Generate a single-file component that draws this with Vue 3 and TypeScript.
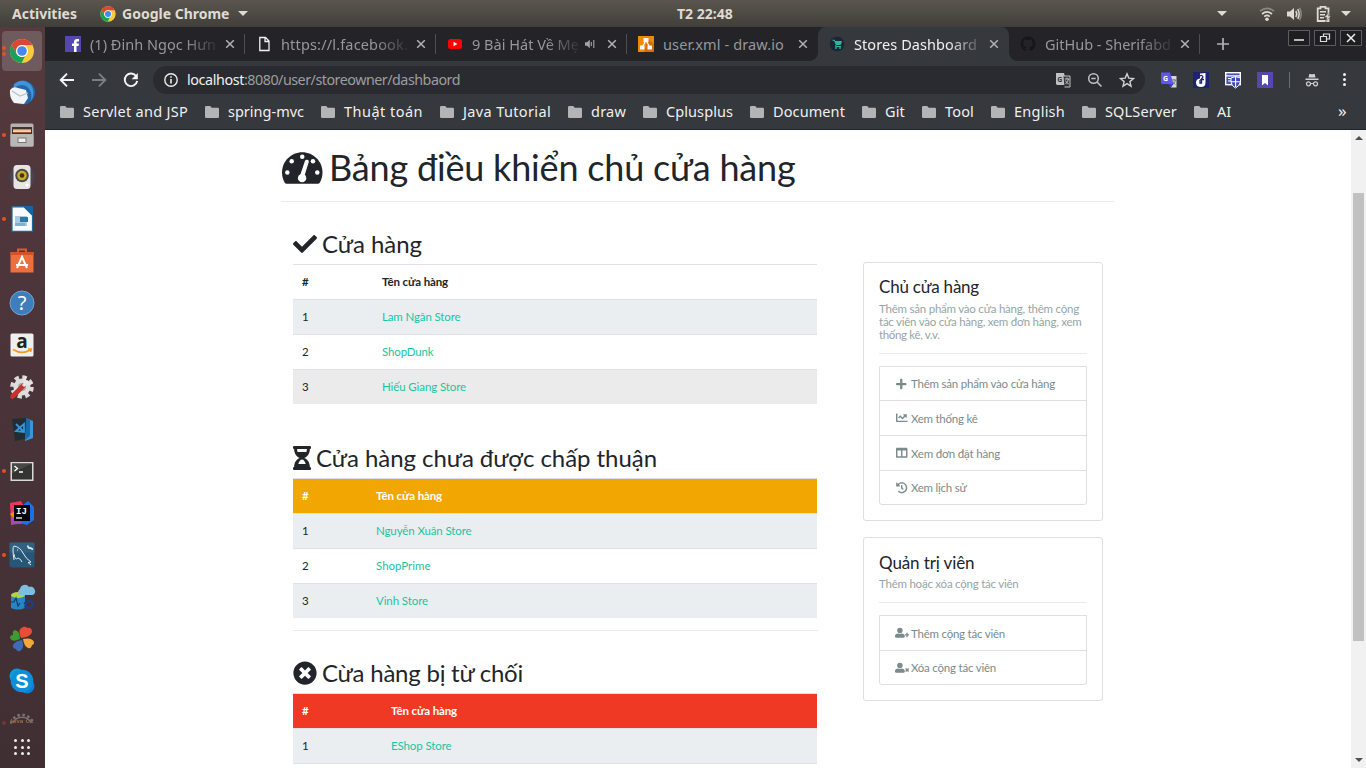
<script setup lang="ts">
import type { ObjectDirective } from 'vue'

/* Spreads a label's letters so that it takes exactly the given width. */
const vFit: ObjectDirective<HTMLElement, number> = {
  mounted(el, { value }) {
    const count = Array.from((el.textContent ?? '').normalize('NFC').trim()).length
    const natural = el.getBoundingClientRect().width
    if (count > 0) el.style.letterSpacing = `${((value - natural) / count).toFixed(4)}px`
  },
}

interface Tab { title: string; icon: string; width: number; active?: boolean; sound?: boolean; fade?: boolean; sep?: boolean }
const tabs: Tab[] = [
  { title: '(1) Đinh Ngọc Hưn', icon: 'facebook', width: 126, fade: true, sep: true },
  { title: 'https://l.facebook.', icon: 'page', width: 127, fade: true, sep: true },
  { title: '9 Bài Hát Về Mẹ', icon: 'youtube', width: 107, sound: true, fade: true, sep: true },
  { title: 'user.xml - draw.io', icon: 'draw', width: 121 },
  { title: 'Stores Dashboard', icon: 'store', width: 123, active: true, fade: true },
  { title: 'GitHub - Sherifabd', icon: 'github', width: 126, fade: true, sep: true },
]

const bookmarks = [
  { name: 'Servlet and JSP', w: 105 }, { name: 'spring-mvc', w: 76 }, { name: 'Thuật toán', w: 79 },
  { name: 'Java Tutorial', w: 88 }, { name: 'draw', w: 35 }, { name: 'Cplusplus', w: 67 },
  { name: 'Document', w: 72 }, { name: 'Git', w: 20 }, { name: 'Tool', w: 29 },
  { name: 'English', w: 51 }, { name: 'SQLServer', w: 72 }, { name: 'AI', w: 14 },
]

const dock = [
  { id: 'chrome', dots: 2, active: true }, { id: 'mail', dots: 0 }, { id: 'files', dots: 1 }, { id: 'music', dots: 0 },
  { id: 'writer', dots: 1 }, { id: 'software', dots: 0 }, { id: 'help', dots: 0 }, { id: 'amazon', dots: 0 },
  { id: 'settings', dots: 0 }, { id: 'vscode', dots: 0 }, { id: 'terminal', dots: 1 }, { id: 'idea', dots: 0 },
  { id: 'mysql', dots: 1 }, { id: 'database', dots: 0 }, { id: 'clover', dots: 0 }, { id: 'skype', dots: 0 },
]

const sections = [
  {
    kind: 'approved', title: 'Cửa hàng', w: 100, icon: 'check', nameCol: 'c1',
    rows: [{ n: 'Lam Ngân Store', w: 78.5 }, { n: 'ShopDunk', w: 51.5 }, { n: 'Hiếu Giang Store', w: 84, hover: true }],
  },
  {
    kind: 'pending', title: 'Cửa hàng chưa được chấp thuận', w: 341, icon: 'hourglass', nameCol: 'c2',
    rows: [{ n: 'Nguyễn Xuân Store', w: 95.5 }, { n: 'ShopPrime', w: 54.5 }, { n: 'Vinh Store', w: 52 }],
  },
  {
    kind: 'rejected', title: 'Cừa hàng bị từ chối', w: 201, icon: 'reject', nameCol: 'c3',
    rows: [{ n: 'EShop Store', w: 60.5 }, { n: '', w: 0 }],
  },
]

const cards = [
  {
    title: 'Chủ cửa hàng', tw: 100,
    lines: [
      { t: 'Thêm sản phẩm vào cửa hàng, thêm cộng', w: 200 },
      { t: 'tác viên vào cửa hàng, xem đơn hàng, xem', w: 202.5 },
      { t: 'thống kê, v.v.', w: 60.5 },
    ],
    items: [
      { t: 'Thêm sản phẩm vào cửa hàng', w: 144, icon: 'plus' },
      { t: 'Xem thống kê', w: 66.5, icon: 'chart' },
      { t: 'Xem đơn đặt hàng', w: 89, icon: 'columns' },
      { t: 'Xem lịch sử', w: 55.5, icon: 'history' },
    ],
  },
  {
    title: 'Quản trị viên', tw: 95.5,
    lines: [{ t: 'Thêm hoặc xóa cộng tác viên', w: 139.5 }],
    items: [
      { t: 'Thêm cộng tác viên', w: 94, icon: 'userplus' },
      { t: 'Xóa cộng tác viên', w: 85, icon: 'usertimes' },
    ],
  },
]

const fa: Record<string, string> = {
  check: 'M173.898 439.404l-166.4-166.4c-9.997-9.997-9.997-26.206 0-36.204l36.203-36.204c9.997-9.998 26.207-9.998 36.204 0L192 312.69 432.095 72.596c9.997-9.997 26.207-9.997 36.204 0l36.203 36.204c9.997 9.997 9.997 26.206 0 36.204l-294.4 294.401c-9.998 9.997-26.207 9.997-36.204-.001z',
  reject: 'M256 8C119 8 8 119 8 256s111 248 248 248 248-111 248-248S393 8 256 8zm121.6 313.1c4.7 4.7 4.7 12.3 0 17L338 377.6c-4.7 4.7-12.3 4.7-17 0L256 312l-65.1 65.6c-4.7 4.7-12.3 4.7-17 0L134.4 338c-4.7-4.7-4.7-12.3 0-17l65.6-65-65.6-65.1c-4.7-4.7-4.7-12.3 0-17l39.6-39.6c4.7-4.7 12.3-4.7 17 0l65 65.7 65.1-65.6c4.7-4.7 12.3-4.7 17 0l39.6 39.6c4.7 4.7 4.7 12.3 0 17L312 256l65.6 65.1z',
  hourglass: 'M24 0h336a24 24 0 0 1 24 24v16a24 24 0 0 1-24 24c0 91-51 168-121 192 70 24 121 101 121 192a24 24 0 0 1 24 24v16a24 24 0 0 1-24 24H24a24 24 0 0 1-24-24v-16a24 24 0 0 1 24-24c0-91 51-168 121-192C75 232 24 155 24 64A24 24 0 0 1 0 40V24A24 24 0 0 1 24 0zM88 64c0 22 3 44 9 64h190c6-20 9-42 9-64zM112 384c17-57 47-96 80-96s63 39 80 96z',
  plus: 'M416 208H272V64c0-17.67-14.33-32-32-32h-32c-17.67 0-32 14.33-32 32v144H32c-17.67 0-32 14.33-32 32v32c0 17.67 14.33 32 32 32h144v144c0 17.67 14.33 32 32 32h32c17.67 0 32-14.33 32-32V304h144c17.67 0 32-14.33 32-32v-32c0-17.67-14.33-32-32-32z',
  chart: 'M496 384H64V80c0-8.84-7.16-16-16-16H16C7.16 64 0 71.16 0 80v336c0 17.67 14.33 32 32 32h464c8.84 0 16-7.16 16-16v-32c0-8.84-7.16-16-16-16zM464 96H345.94c-21.38 0-32.09 25.85-16.97 40.97l32.4 32.4L288 242.75l-73.37-73.37c-12.5-12.5-32.76-12.5-45.25 0l-68.69 68.69c-6.25 6.25-6.25 16.38 0 22.63l22.62 22.62c6.25 6.25 16.38 6.25 22.63 0L192 237.25l73.37 73.37c12.5 12.5 32.76 12.5 45.25 0l96-96 32.4 32.4c15.12 15.12 40.97 4.41 40.97-16.97V112c.01-8.84-7.15-16-15.99-16z',
  columns: 'M464 32H48C21.49 32 0 53.49 0 80v352c0 26.51 21.49 48 48 48h416c26.51 0 48-21.49 48-48V80c0-26.51-21.49-48-48-48zM224 416H64V160h160v256zm224 0H288V160h160v256z',
  history: 'M504 255.531c.253 136.64-111.18 248.372-247.82 248.468-59.015.042-113.223-20.53-155.822-54.911-11.077-8.94-11.905-25.541-1.839-35.607l11.267-11.267c8.609-8.609 22.353-9.551 31.891-1.984C173.062 425.135 212.781 440 256 440c101.705 0 184-82.311 184-184 0-101.705-82.311-184-184-184-48.814 0-93.149 18.969-126.068 49.932l50.754 50.754c10.08 10.08 2.941 27.314-11.313 27.314H24c-8.837 0-16-7.163-16-16V38.627c0-14.254 17.234-21.393 27.314-11.314l49.372 49.372C129.209 34.136 189.552 8 256 8c136.81 0 247.747 110.78 248 247.531zm-180.912 78.784l9.823-12.63c8.138-10.463 6.253-25.542-4.21-33.679L288 256.349V152c0-13.255-10.745-24-24-24h-16c-13.255 0-24 10.745-24 24v135.651l65.409 50.874c10.463 8.137 25.541 6.253 33.679-4.21z',
  userplus: 'M224 32a125 125 0 1 0 0 250a125 125 0 1 0 0-250zM310 290c-50 26-122 26-172 0C62 300 0 340 0 400v40c0 22 18 40 40 40h368c22 0 40-18 40-40v-40c0-60-62-100-138-110zM520 260v70h-64v56h64v70h60v-70h60v-56h-60v-70z',
  usertimes: 'M224 32a125 125 0 1 0 0 250a125 125 0 1 0 0-250zM310 290c-50 26-122 26-172 0C62 300 0 340 0 400v40c0 22 18 40 40 40h368c22 0 40-18 40-40v-40c0-60-62-100-138-110zM462 312l44-44 48 48 48-48 42 44-48 48 48 48-42 44-48-48-48 48-44-44 48-48z',
}
const faBox: Record<string, string> = { hourglass: '0 0 384 512', plus: '0 0 448 512', userplus: '0 0 640 512', usertimes: '0 0 640 512' }
const apps = [0, 1, 2, 3, 4, 5, 6, 7, 8]
</script>

<template>
  <div class="screen">
    <header class="topbar">
      <span v-fit="68" class="activities">Activities</span>
      <svg class="tb-chrome" viewBox="0 0 24 24">
        <circle cx="12" cy="12" r="11.5" fill="#fcc93c" />
        <path d="M2 6.3A11.5 11.5 0 0 1 22 6.3H12A5.7 5.7 0 0 0 7 14.8z" fill="#dd4538" />
        <path d="M2 6.3L7 14.8A5.7 5.7 0 0 0 14.8 17L11.5 23.5A11.5 11.5 0 0 1 2 6.3z" fill="#18a15c" />
        <circle cx="12" cy="12" r="5.6" fill="#fff" /><circle cx="12" cy="12" r="4.5" fill="#4587f3" />
      </svg>
      <span v-fit="111" class="appname">Google Chrome</span>
      <i class="caret"></i>
      <span v-fit="58" class="clock">T2 22:48</span>
      <i class="caret tray-first"></i>
      <svg class="tray wifi" viewBox="0 0 16 16" fill="none" stroke-width="1.7">
        <path d="M1 5.2Q8-.4 15 5.2" stroke="#8a8881" /><path d="M3 8Q8 3.7 13 8M5.3 10.6Q8 8.2 10.7 10.6" stroke="#dfdbd2" /><circle cx="8" cy="13.2" r="1.8" fill="#dfdbd2" />
      </svg>
      <svg class="tray sound" viewBox="0 0 16 16" fill="none" stroke-width="1.5">
        <path d="M1 5.5h3L8 2v12l-4-3.5H1z" fill="#dfdbd2" /><path d="M9.8 5Q11.8 8 9.8 11M11.7 3.2Q14.6 8 11.7 12.8" stroke="#dfdbd2" /><path d="M13.5 1.8Q17 8 13.5 14.2" stroke="#8a8881" />
      </svg>
      <svg class="tray batt" viewBox="0 0 16 16">
        <path d="M4.500 2.300V.8h5v1.500H12.500V15H1.700V2.300z" fill="none" stroke="#dfdbd2" stroke-width="1.800" /><path d="M4 5h6v1.500H4zM4 8h5v1.500H4zM4 11h4v1.500H4z" fill="#dfdbd2" /><path d="M13 6.500l-5 5h3l-1.500 4.500 5.500-6h-3l2-3.500z" fill="#dfdbd2" stroke="#4c4a44" stroke-width=".5" />
      </svg>
      <i class="caret tray-last"></i>
    </header>

    <div class="body">
      <nav class="dock">
        <div v-for="d in dock" :key="d.id" class="slot" :class="{ active: d.active }">
          <span class="dots"><b v-for="k in d.dots" :key="k"></b></span>
          <svg class="dicon" viewBox="0 0 26 26">
            <template v-if="d.id === 'chrome'">
              <circle cx="13" cy="13" r="12" fill="#fbc93c" />
              <path d="M2.600 7A12 12 0 0 1 23.400 7H13A6 6 0 0 0 7.800 16z" fill="#dd4538" />
              <path d="M2.600 7L7.800 16A6 6 0 0 0 16 18.200L12.500 25A12 12 0 0 1 2.600 7z" fill="#18a15c" />
              <circle cx="13" cy="13" r="6" fill="#fff" /><circle cx="13" cy="13" r="4.800" fill="#4587f3" />
            </template>
            <template v-else-if="d.id === 'mail'">
              <circle cx="14" cy="12.500" r="12" fill="#2467ad" /><path d="M5 4Q14-3 22 5Q27 13 22 21Q24 10 17 6Q11 3 5 8z" fill="#3f95da" />
              <path d="M1 10Q4 6 9 8l8 2 2 8-4 6-10-1Q0 17 1 10z" fill="#f2f4f8" /><path d="M3 11l8 5 8-3" fill="none" stroke="#b3c0d0" stroke-width="1.200" />
            </template>
            <template v-else-if="d.id === 'files'">
              <rect x="1.500" y="1.500" width="23" height="23" rx="1.500" fill="#b5b3b1" /><rect x="3" y="5" width="20" height="7" fill="#43332d" /><rect x="4" y="7" width="18" height="3.500" fill="#f07c35" /><rect x="4" y="8.500" width="18" height="1.200" fill="#fff" />
              <rect x="1.500" y="12" width="23" height="12.500" rx="1" fill="#b9b8b7" /><rect x="9" y="16" width="8" height="4.500" fill="#eee" stroke="#777" />
            </template>
            <template v-else-if="d.id === 'music'">
              <circle cx="13" cy="13" r="12.500" fill="#46506e" opacity=".5" /><rect x="4.500" y="1" width="17" height="24" rx="3.500" fill="#e6e5e2" /><circle cx="13" cy="11.500" r="6.800" fill="#4b4a47" /><circle cx="13" cy="11.500" r="4.800" fill="#c9aa2a" /><circle cx="13" cy="11.500" r="2.300" fill="#3d3520" /><circle cx="18" cy="21" r="1.500" fill="#fff" />
            </template>
            <template v-else-if="d.id === 'writer'">
              <path d="M3 .8h12l8.500 8.500v16H3z" fill="#f8fafb" stroke="#1a679d" stroke-width="1.200" /><path d="M14 0h10v10z" fill="#1565a0" /><path d="M6 10h12v10H6z" fill="#a8cbe2" /><path d="M11 11h8v5h-8z" fill="#2f77a5" /><path d="M6 17h10v3H6z" fill="#7fb0d0" />
            </template>
            <template v-else-if="d.id === 'software'">
              <path d="M9 5V1.500h8V5" fill="none" stroke="#d95a2e" stroke-width="2" /><path d="M1.500 4h23v20.500h-23z" fill="#ec6f3f" /><path d="M1.500 4h23v3h-23z" fill="#d2532b" />
              <path d="M8 20l5-11 5 11M7 17h12" fill="none" stroke="#fff" stroke-width="2" />
            </template>
            <template v-else-if="d.id === 'help'">
              <circle cx="13" cy="13" r="12" fill="#3e7ebb" stroke="#74a4d0" /><text x="13" y="20" text-anchor="middle" class="g-help">?</text>
            </template>
            <template v-else-if="d.id === 'amazon'">
              <rect x="1.500" y="1.500" width="23" height="23" rx="1.500" fill="#efefef" /><text x="13" y="16" text-anchor="middle" class="g-amz">a</text><path d="M4 17.500Q13 23 21 18M19 17h3.500l-1 3" fill="none" stroke="#f29a1f" stroke-width="1.500" />
            </template>
            <template v-else-if="d.id === 'settings'">
              <circle cx="13" cy="13" r="9.800" fill="none" stroke="#dadada" stroke-width="4" stroke-dasharray="4.300 3.400" /><circle cx="13" cy="13" r="8.600" fill="#dedede" /><circle cx="13" cy="13" r="4" fill="#a9a5a5" />
              <path d="M3.500 22.500L14 12" stroke="#c4332d" stroke-width="4.600" stroke-linecap="round" /><path d="M14 12l5-5" stroke="#eee" stroke-width="3" /><path d="M17 3a4 4 0 1 0 6 5" fill="none" stroke="#e5e5e5" stroke-width="2.500" />
            </template>
            <template v-else-if="d.id === 'vscode'">
              <path d="M17 2l7 3v17l-8 3z" fill="#3a96d8" /><path d="M3 3l15-1-2 21-10 2z" fill="#222c35" /><path d="M17 2l4 2v16l-5 4z" fill="#196ba8" /><path d="M7 8l8 8M7 15l8-7v8z" fill="none" stroke="#3795d9" stroke-width="1.800" />
            </template>
            <template v-else-if="d.id === 'terminal'">
              <rect x="1.500" y="4" width="23" height="19" fill="#d9d9d7" /><rect x="3" y="5.500" width="20" height="16" fill="#343433" /><path d="M3 5.500h20l-20 10z" fill="#484847" /><path d="M5.500 8l3 2.500-3 2.500M10 14h4" fill="none" stroke="#fff" stroke-width="1.300" />
            </template>
            <template v-else-if="d.id === 'idea'">
              <path d="M1 3l11-2 3 6-3 17-10-1z" fill="#ee3660" /><path d="M1 14l5-3v9z" fill="#f98b1e" /><path d="M14 5l5-4 6 6v13l-7 5-8-2z" fill="#1a70e6" /><path d="M2 18l4-1 8 6-12 2z" fill="#a14bbd" /><rect x="5" y="5" width="16" height="16" fill="#050505" /><text x="12.500" y="13.500" text-anchor="middle" class="g-ij">IJ</text><path d="M7 18h6" stroke="#fff" stroke-width="1.300" />
            </template>
            <template v-else-if="d.id === 'mysql'">
              <rect x=".5" y=".5" width="25" height="25" rx="2.500" fill="#275777" /><path d="M.5.5h25v10h-25z" fill="#37688a" opacity=".6" /><path d="M5 18Q3 5 5 4q6 1 9 7 3 6 8 9l-3 .5 3 2.500M5 12q1 7 4 4 3 1 4 4M8 8h1" fill="none" stroke="#e1e9ee" stroke-width="1" /><path d="M19 3.500a2 2 0 0 0 2.500 2.500l2.500 1.500" fill="none" stroke="#dbe4e9" stroke-width="1.800" />
            </template>
            <template v-else-if="d.id === 'database'">
              <path d="M2 11h14v13q-7 3-14 0z" fill="#2486c8" /><ellipse cx="9" cy="11" rx="7" ry="3" fill="#b9d432" /><path d="M10 11a4 4 0 0 1 1-6 5 5 0 0 1 9-2 4.500 4.500 0 0 1 4 8z" fill="#7dbde0" /><path d="M2 18h3l2-4 2 8 2-3" fill="none" stroke="#16405f" stroke-width="1.200" /><circle cx="20" cy="20.500" r="3.400" fill="none" stroke="#1d3f86" stroke-width="2.200" /><circle cx="20" cy="20.500" r="4.800" fill="none" stroke="#1d3f86" stroke-width="1.200" stroke-dasharray="2 1.800" />
            </template>
            <template v-else-if="d.id === 'clover'">
              <path d="M12 12Q8 3 14 1q3-1 4 1 5-1 5 4-1 5-11 6z" fill="#e84e37" /><path d="M14 13q9-2 11 3 0 3-2 3-1 4-4 3-4-2-5-9z" fill="#f5a836" /><path d="M13 14q3 8-2 11-3 1-4-2-4-1-3-4 2-4 9-5z" fill="#3e6db5" /><path d="M11 13Q3 17 1 12q0-3 3-3-1-4 2-5 5 1 5 9z" fill="#3c9c32" />
            </template>
            <template v-else>
              <circle cx="8" cy="8" r="7.500" fill="#0f9ade" /><circle cx="18" cy="18" r="7.500" fill="#0a80d4" /><circle cx="13" cy="13" r="11.300" fill="#0d8fdb" /><text x="13" y="20" text-anchor="middle" class="g-skype">S</text>
            </template>
          </svg>
        </div>
        <div class="slot half">
          <span class="dots dim"><b></b></span>
          <svg class="dicon" viewBox="0 0 26 26">
            <path d="M4 13a10 10 0 0 1 18 0" fill="none" stroke="#8d888a" stroke-width="1.500" /><path d="M2 13a11.500 11.500 0 0 1 22 0" fill="none" stroke="#8d888a" stroke-width="2.500" stroke-dasharray="2.500 2.500" />
            <text x="13" y="13" text-anchor="middle" class="g-java">Java CC</text>
          </svg>
        </div>
        <div class="apps"><i v-for="a in apps" :key="a"></i></div>
      </nav>

      <main class="window">
        <div class="tabstrip">
          <div v-for="t in tabs" :key="t.title" class="tab" :class="{ on: t.active, sep: t.sep }">
            <svg class="fav" viewBox="0 0 16 16">
              <template v-if="t.icon === 'facebook'"><rect width="16" height="16" fill="#5546b0" /><path d="M9 16V10H7V7.500h2V6q0-3 3-3h2v2.500h-1.200q-1.200 0-1.200 1v1H14L13.500 10h-2v6z" fill="#fff" /></template>
              <path v-else-if="t.icon === 'page'" d="M3.800 1.500h5.700L13 5v9.500H3.800zM9 1.500V5.500H13" fill="none" stroke="#f2f2f2" stroke-width="1.300" />
              <template v-else-if="t.icon === 'youtube'"><rect x="1" y="3" width="14" height="10" rx="2.500" fill="#f00" /><path d="M6.500 5.800v4.400L10.300 8z" fill="#fff" /></template>
              <template v-else-if="t.icon === 'draw'"><rect width="16" height="16" fill="#f08705" /><path d="M10 3l6 5v8H6z" fill="#da6a03" /><path d="M8 4L4 12M8 4l4 8" stroke="#fff" stroke-width="1.300" /><path d="M5.500 2h5v4h-5zM2 9.500h4.500v4H2zM9.500 9.500H14v4H9.500z" fill="#fff" /></template>
              <template v-else-if="t.icon === 'store'"><circle cx="8" cy="8" r="7.300" fill="#1c2536" /><path d="M3.500 4.200h2l1.500 4.300h4.500l1-3H6" fill="#28b99a" stroke="#28b99a" /><path d="M7 9L6.500 10.500H12" fill="none" stroke="#28b99a" /><circle cx="7" cy="12" r=".9" fill="#28b99a" /><circle cx="11" cy="12" r=".9" fill="#28b99a" /></template>
              <path v-else d="M8 .5a7.500 7.500 0 0 0-2.400 14.600c.4 0 .5-.2.500-.5v-1.800c-2 .4-2.600-.9-2.800-1.500-.3-.6-.7-1-.9-1 1-.2 1.600.9 2 1.400.5.700 1.200.6 1.800.4 0-.5.300-.9.500-1-2-.3-3.500-1-3.500-3.800 0-.8.300-1.500.8-2 0-.5-.2-1.200.1-2 .7 0 1.500.4 2 .8a7 7 0 0 1 3.800 0c.6-.4 1.400-.8 2-.8.300.8.200 1.500.1 2 .5.500.8 1.200.8 2 0 2.800-1.600 3.500-3.500 3.800.4.300.6.800.6 1.500v2c0 .3.100.6.500.5A7.500 7.500 0 0 0 8 .5z" fill="#17171a" />
            </svg>
            <span class="ttl" :class="{ fade: t.fade, short: t.sound }"><span v-fit="t.width">{{ t.title }}</span></span>
            <svg v-if="t.sound" class="spk" viewBox="0 0 10 10"><path d="M0 3.300h2L4.800.8v8.400L2 6.700H0z" fill="#a3a5a8" /><path d="M6.300 3v4M8.800 1v8" stroke="#a3a5a8" stroke-width="1.100" /></svg>
            <svg class="x" viewBox="0 0 10 10"><path d="M1.200 1.200l7.600 7.600M8.800 1.200L1.200 8.800" stroke-width="1.500" /></svg>
          </div>
          <svg class="newtab" viewBox="0 0 12 12"><path d="M6 0v12M0 6h12" stroke="#b0b2b5" stroke-width="1.700" /></svg>
          <div class="winbtns">
            <span><svg viewBox="0 0 22 16"><path d="M6 10h10" stroke="#eee" stroke-width="1.500" /></svg></span>
            <span><svg viewBox="0 0 22 16"><path d="M6.500 6.500h6v5h-6zM9.500 6V4h6v5h-2.500" fill="none" stroke="#ddd" stroke-width="1.200" /></svg></span>
            <span><svg viewBox="0 0 22 16"><path d="M7 4l8 8M15 4l-8 8" stroke="#eee" stroke-width="1.500" /></svg></span>
          </div>
        </div>

        <div class="toolbar">
          <svg class="nav" viewBox="0 0 16 16"><path d="M15 8H2M8 1.700L1.700 8 8 14.300" fill="none" stroke="#f5f5f5" stroke-width="1.900" /></svg>
          <svg class="nav" viewBox="0 0 16 16"><path d="M1 8h13M8 1.700L14.300 8 8 14.300" fill="none" stroke="#7c7f82" stroke-width="1.900" /></svg>
          <svg class="nav" viewBox="0 0 16 16"><path d="M13.300 4.300A6.300 6.300 0 1 0 14.200 9" fill="none" stroke="#f5f5f5" stroke-width="1.900" /><path d="M14.800 1v6.200H8.600z" fill="#f5f5f5" /></svg>
          <div class="omni">
            <svg class="info" viewBox="0 0 14 14"><circle cx="7" cy="7" r="6.200" fill="none" stroke="#eceded" stroke-width="1.400" /><path d="M7 6v4.500M7 3.300v1.500" stroke="#eceded" stroke-width="1.600" /></svg>
            <span class="url"><b v-fit="57">localhost</b><span v-fit="216">:8080/user/storeowner/dashbaord</span></span>
            <svg class="oi" viewBox="0 0 16 16"><path d="M1 1h8l3 12H2L1 12z" fill="#bfc1c3" /><path d="M8.500 4H15v11H9.500" fill="#33363a" stroke="#bfc1c3" /><text x="2.200" y="9.500" class="g-tr">G</text><path d="M9.800 7h4.500M12 5.500V7M13.500 7q-.5 3-3 5M10.500 8.500q1 2.500 3.300 3.500" fill="none" stroke="#bfc1c3" /></svg>
            <svg class="oi" viewBox="0 0 16 16"><circle cx="6.500" cy="6.500" r="4.800" fill="none" stroke="#bfc1c3" stroke-width="1.500" /><path d="M10 10l4.500 4.500M4.300 6.500h4.400" stroke="#bfc1c3" stroke-width="1.500" /></svg>
            <svg class="oi" viewBox="0 0 16 16"><path d="M8 1.800l1.800 4.300 4.700.4-3.600 3.100 1.100 4.600L8 11.700l-4 2.500 1.100-4.600L1.500 6.500l4.700-.4z" fill="none" stroke="#d0d1d3" stroke-width="1.400" /></svg>
          </div>
          <svg class="ext" viewBox="0 0 16 16"><path d="M5 4h10.500v11.500H10z" fill="#d6d6d6" /><path d="M0 .5h9L12.500 12H1L0 11z" fill="#6156ee" /><path d="M7.500 12h5L10 15.500z" fill="#4836c8" /><text x="2" y="9" class="g-ext">G</text><path d="M11 8h4M13 7v1M14.500 8q-.5 2.500-2.500 4M12 9.500q1 2 2.500 3" stroke="#666" stroke-width=".8" fill="none" /></svg>
          <svg class="ext" viewBox="0 0 16 16"><rect width="16" height="16" fill="#1d2372" /><path d="M7 1.500l5.500-.5v9.500q0 4.500-4.500 4.500-5 0-5-4.500 0-3.500 4-4z" fill="#fff" /><path d="M7 4q2-1.500 3 1l-2 2.500h3M7 8v3h1.500V8" fill="none" stroke="#1d2372" stroke-width="1.300" /></svg>
          <svg class="ext" viewBox="0 0 16 16"><rect x=".7" y=".7" width="14.600" height="12" fill="#4653b8" stroke="#fff" stroke-width="1.400" /><path d="M1 3.800h14M3 6.500h4M3 9h3" stroke="#fff" stroke-width="1.200" /><path d="M6 6l4.500-1.500L15.500 6v4q-1 4-5 6-4-2-4.500-6z" fill="#3a49c0" stroke="#fff" stroke-width="1" /><path d="M10.600 4.500V15M6 9.800h9" stroke="#fff" stroke-width="1.100" /></svg>
          <svg class="ext" viewBox="0 0 16 16"><rect width="16" height="16" fill="#5546b0" /><path d="M5 3h6v10.500l-3-2.500-3 2.500z" fill="#fff" /></svg>
          <i class="tsep"></i>
          <svg class="incog" viewBox="0 0 14 14"><path d="M3.500 4.500L4.300 1h1.500L7 1.500 8.200 1h1.500l.8 3.500zM.5 5.500h13V7H.5z" fill="#cfd0d2" /><circle cx="3.500" cy="10.800" r="2" fill="none" stroke="#cfd0d2" stroke-width="1.200" /><circle cx="10.500" cy="10.800" r="2" fill="none" stroke="#cfd0d2" stroke-width="1.200" /><path d="M5.500 10.500h3" stroke="#cfd0d2" /></svg>
          <span class="kebab"><i></i><i></i><i></i></span>
        </div>

        <div class="bookmarks">
          <div v-for="b in bookmarks" :key="b.name" class="bm">
            <svg viewBox="0 0 14 12"><path d="M1.200 0h4l1.500 1.700h6.100q1.200 0 1.200 1.200v7.900Q14 12 12.800 12H1.200Q0 12 0 10.800V1.200Q0 0 1.200 0z" fill="#b4b4b6" /></svg>
            <span v-fit="b.w">{{ b.name }}</span>
          </div>
          <span class="more">»</span>
        </div>

        <div class="viewport">
          <div class="page">
            <h1>
              <svg class="tacho" viewBox="0 0 576 512"><path d="M288 32C129 32 0 161 0 320c0 53 14 102 39 145 6 9 16 15 27 15h444c11 0 21-6 27-15 25-43 39-92 39-145C576 161 447 32 288 32z" fill="#212529" /><g fill="#fff"><circle cx="288" cy="96" r="32" /><circle cx="138" cy="160" r="32" /><circle cx="76" cy="320" r="32" /><circle cx="440" cy="160" r="32" /><circle cx="502" cy="320" r="32" /><circle cx="286" cy="400" r="60" /><path d="M258 360l68-205q10-22 36-15 24 8 18 32l-62 200z" /></g></svg>
              <span v-fit="466.5">Bảng điều khiển chủ cửa hàng</span>
            </h1>
            <div class="cols">
              <div class="left">
                <section v-for="s in sections" :key="s.kind" :class="['sec', s.kind]">
                  <h2>
                    <svg :class="s.icon" :viewBox="faBox[s.icon] ?? '0 0 512 512'"><path :d="fa[s.icon]" fill="#212529" fill-rule="evenodd" /></svg>
                    <span v-fit="s.w">{{ s.title }}</span>
                  </h2>
                  <div class="table" :class="s.nameCol">
                    <div class="tr th"><span>#</span><span><span v-fit="66">Tên cửa hàng</span></span></div>
                    <div v-for="(r, i) in s.rows" :key="r.n" class="tr" :class="{ hover: 'hover' in r }">
                      <span>{{ r.n ? i + 1 : '' }}</span><a><span v-fit="r.w">{{ r.n }}</span></a>
                    </div>
                  </div>
                </section>
              </div>
              <aside class="right">
                <div v-for="c in cards" :key="c.title" class="card">
                  <h3><span v-fit="c.tw">{{ c.title }}</span></h3>
                  <p v-for="l in c.lines" :key="l.t"><span v-fit="l.w">{{ l.t }}</span></p>
                  <div class="hr"></div>
                  <ul>
                    <li v-for="it in c.items" :key="it.t">
                      <span class="ic"><svg :class="it.icon" :viewBox="faBox[it.icon] ?? '0 0 512 512'"><path :d="fa[it.icon]" fill="#7b8a8b" /></svg></span>
                      <span v-fit="it.w">{{ it.t }}</span>
                    </li>
                  </ul>
                </div>
              </aside>
            </div>
          </div>
          <div class="scroll"><i class="up"></i><i class="thumb"></i><i class="down"></i></div>
        </div>
      </main>
    </div>
  </div>
</template>

<style>
html, body { margin: 0; overflow: hidden; }
</style>

<style scoped>
* { box-sizing: border-box; }
svg { display: block; flex: none; overflow: visible; }
.screen { width: 1366px; height: 768px; overflow: hidden; display: flex; flex-direction: column; font-family: "Noto Sans", "Open Sans", sans-serif; white-space: nowrap; }
.topbar { height: 27px; flex: none; display: flex; align-items: center; background: linear-gradient(#5a564e, #413f3a); color: #dfdbd2; font-size: 14px; font-weight: 700; padding-left: 12px; line-height: 26px; }
.activities { width: 68px; }
.tb-chrome { width: 16px; height: 16px; margin-left: 20px; margin-right: 6px; }
.appname { width: 111px; }
.caret { flex: none; border: 5px solid transparent; border-top-color: #dfdbd2; border-bottom: 0; margin-left: 5px; }
.clock { width: 58px; margin-left: 429px; font-size: 14px; }
.tray-first { margin-left: 482px; }
.tray { width: 16px; height: 16px; }
.wifi { margin-left: 32px; }
.sound { margin-left: 11px; }
.batt { margin-left: 14px; }
.tray-last { margin-left: 9px; }

.body { flex: 1; display: flex; min-height: 0; }
.dock { width: 45px; flex: none; display: flex; flex-direction: column; padding-top: 3px; background: linear-gradient(#563a3d, #4c353b 35%, #402f32); }
.slot { height: 42px; flex: none; display: flex; align-items: center; margin-right: 3px; border-radius: 4px; }
.slot.active { background: #6f5a5d; height: 40px; margin: 1px 3px 1px 2px; }
.slot.active .dots { width: 7px; }
.slot.half { height: 24px; align-items: flex-start; overflow: hidden; padding-top: 8px; opacity: .75; }
.dots { width: 9px; display: flex; flex-direction: column; gap: 2px; padding-left: 2px; flex: none; }
.active .dots { padding-left: 0; }
.dots b { width: 4px; height: 4px; border-radius: 50%; background: #e2531f; }
.dots.dim { padding-top: 11px; opacity: .4; }
.dicon { width: 26px; height: 26px; }
.g-help { font: 20px/1 "Noto Sans", sans-serif; fill: #fff; }
.g-amz { font: 700 19px/1 "Open Sans", sans-serif; fill: #222; }
.g-ij { font: 700 9px "Liberation Mono", monospace; fill: #fff; }
.g-skype { font: 700 20px "Liberation Sans", sans-serif; fill: #fff; }
.g-java { font: 700 5.500px "DejaVu Sans", sans-serif; fill: #a87750; }
.apps { display: grid; grid-template-columns: repeat(3, 3px); gap: 3.500px; margin: 13px 0 0 14px; }
.apps i { width: 3px; height: 3px; border-radius: 50%; background: #eee; }

.window { flex: 1; min-width: 0; display: flex; flex-direction: column; }
.tabstrip { height: 34px; flex: none; display: flex; background: #242328; padding-left: 9px; align-items: stretch; }
.tab { width: 191px; flex: none; display: flex; align-items: center; padding-left: 11px; color: #96989b; position: relative; }
.tab.sep::after { content: ""; position: absolute; right: 0; top: 7px; width: 1px; height: 20px; background: #4d4e52; }
.tab.on { background: #35383d; border-radius: 8px 8px 0 0; color: #f1f1f1; }
.tab.on::before, .tab.on::after { content: ""; position: absolute; bottom: 0; width: 8px; height: 8px; }
.tab.on::before { left: -8px; background: radial-gradient(circle at 0 0, #242328 7.500px, #35383d 8px); }
.tab.on::after { right: -8px; background: radial-gradient(circle at 100% 0, #242328 7.500px, #35383d 8px); }
.fav { width: 16px; height: 16px; }
.ttl { width: 126px; margin-left: 9px; font-size: 14.500px; line-height: 34px; overflow: hidden; }
.ttl.short { width: 107px; }
.ttl.fade { mask-image: linear-gradient(90deg, #000 calc(100% - 32px), transparent 104%); }
.spk { width: 10px; height: 10px; margin-left: 6px; margin-right: 3px; }
.x { width: 10px; height: 10px; margin-left: 9px; stroke: #b1b3b5; }
.newtab { width: 12px; height: 12px; margin: 11px 0 0 17px; }
.winbtns { display: flex; gap: 4px; margin: 3px 0 0 59px; }
.winbtns span { width: 22px; height: 16px; background: #1e1d20; box-shadow: inset 0 0 0 1px #5e5e5f; border-radius: 1px; }
.winbtns svg { width: 22px; height: 16px; }
.toolbar { height: 37px; flex: none; background: #35383d; display: flex; align-items: center; padding-left: 14px; }
.nav { width: 16px; height: 16px; margin-right: 16px; }
.omni { width: 992px; height: 28px; margin-left: -2px; margin-right: 16px; border-radius: 14px; background: #292b30; display: flex; align-items: center; padding-left: 11px; }
.info { width: 14px; height: 14px; }
.url { margin-left: 9px; width: 852px; font-size: 14.300px; line-height: 28px; color: #9c9ea1; display: flex; }
.url b { font-weight: 400; color: #f0f0f0; }
.oi { width: 16px; height: 16px; margin-left: 16px; }
.g-tr { font: 700 7px "Noto Sans", sans-serif; fill: #33363a; }
.g-ext { font: 700 7px "Noto Sans", sans-serif; fill: #fff; }
.ext { width: 16px; height: 16px; margin-right: 16px; }
.tsep { width: 1px; height: 16px; background: #6b6d70; }
.incog { width: 14px; height: 14px; margin-left: 15px; margin-right: 24px; }
.kebab { display: flex; flex-direction: column; gap: 2px; }
.kebab i { width: 3px; height: 3px; border-radius: 50%; background: #f0f0f0; }
.bookmarks { height: 32px; flex: none; background: #35383d; border-bottom: 1px solid #232428; display: flex; align-items: center; gap: 17px; padding-left: 15px; color: #f0f0f0; font-size: 14.500px; line-height: 24px; padding-bottom: 6px; }
.bm { display: flex; align-items: center; gap: 9px; }
.bm svg { width: 14px; height: 12px; position: relative; top: 1px; }
.more { margin-left: 90px; font-size: 17px; }

.viewport { flex: 1; min-height: 0; background: #fff; display: flex; justify-content: space-between; font-family: Lato, sans-serif; color: #212529; overflow: hidden; }
.page { width: 833px; margin-left: 236px; }
h1, h2, h3, p, ul { margin: 0; padding: 0; font-weight: 400; }
h1 { height: 72px; border-bottom: 1px solid #ebebeb; display: flex; align-items: flex-start; font-size: 36px; line-height: 44px; padding-top: 15px; }
.tacho { width: 40.500px; height: 36px; margin: 5px 6.500px 0 1px; }
.cols { display: flex; justify-content: space-between; }
.left { width: 525px; margin-left: 12px; }
.sec h2 { display: flex; align-items: center; height: 41px; font-size: 24px; line-height: 41px; }
.sec h2 svg { width: 24px; height: 24px; margin-right: 5px; }
.sec h2 svg.hourglass { width: 18px; }
.approved { padding-top: 21px; }
.pending { padding-top: 33px; border-bottom: 1px solid #ebebeb; height: 227px; }
.rejected { padding-top: 21px; }
.table { width: 524px; font-size: 11.500px; }
.tr { height: 35px; border-top: 1px solid #dee2e6; display: flex; align-items: center; padding-left: 9px; line-height: 34px; }
.tr > :first-child { width: 80px; flex: none; }
.c2 .tr > :first-child { width: 74px; }
.c3 .tr > :first-child { width: 89px; }
.tr a { color: #18c5a2; }
.tr:nth-child(even) { background: #ebeef0; }
.tr.hover:nth-child(even) { background: #ebebeb; }
.th { font-weight: 700; }
.pending .th { background: #f2a602; color: #fff; }
.rejected .th { background: #ef3924; color: #fff; }
.right { width: 240px; margin-right: 11px; padding-top: 60px; }
.card { border: 1px solid #dfdfdf; border-radius: 3px; padding: 14px 15px 15px; margin-bottom: 16px; }
.card h3 { font-size: 17px; line-height: 20px; height: 25px; }
.card:last-child h3 { padding-top: 1px; }
.card p { font-size: 11.500px; line-height: 13px; height: 13px; color: #95a5a6; }
.hr { height: 1px; background: #ebebeb; margin: 12px 0 12px; }
.card ul { list-style: none; border: 1px solid #dfdfdf; border-radius: 0 0 3px 3px; }
.card li { height: 35px; border-bottom: 1px solid #dfdfdf; display: flex; align-items: center; padding-left: 15px; font-size: 11.500px; line-height: 33px; color: #7b8a8b; }
.card li:first-child { height: 34px; }
.card:last-child li:first-child { height: 35px; }
.card li:last-child { border-bottom: 0; height: 33px; }
.ic { width: 14px; margin-right: 2px; display: flex; justify-content: center; }
.ic svg { width: 11.500px; height: 11.500px; margin-right: 1px; }
.ic svg.plus { width: 10.500px; height: 12px; }
.ic svg.userplus, .ic svg.usertimes { width: 14px; }
.scroll { width: 15px; background: #f1f1f1; display: flex; flex-direction: column; align-items: center; }
.up { border: 4px solid transparent; border-top: 0; border-bottom-color: #505050; margin-top: 6px; }
.down { border: 4px solid transparent; border-bottom: 0; border-top-color: #505050; margin-top: 117px; }
.thumb { width: 11px; height: 448px; background: #c1c1c1; margin-top: 53px; }
</style>
